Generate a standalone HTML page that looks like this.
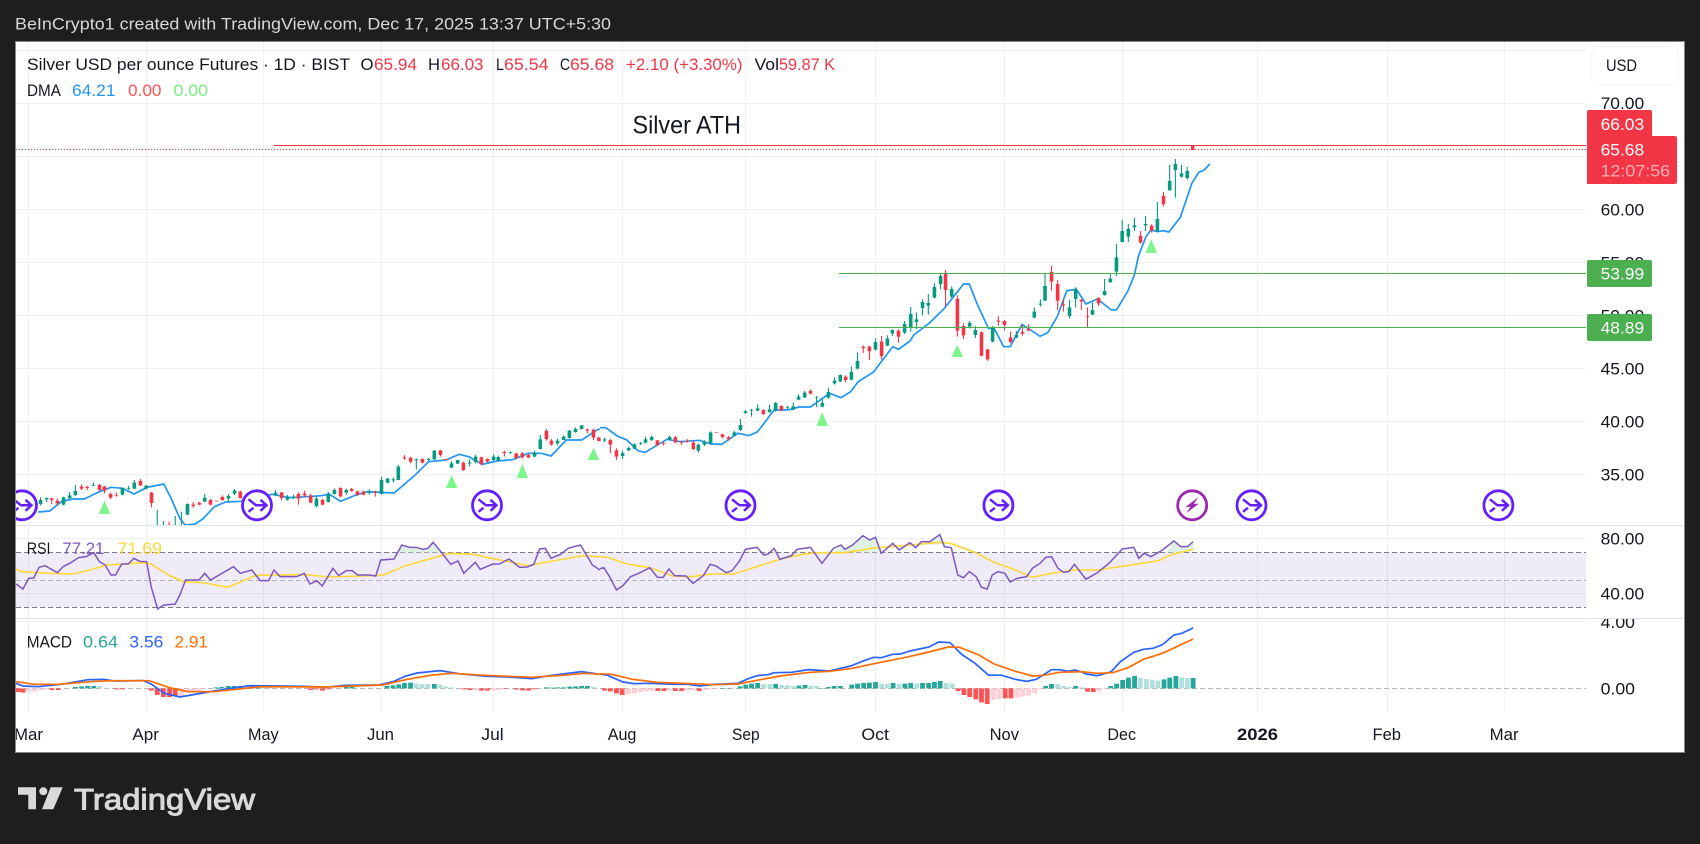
<!DOCTYPE html>
<html><head><meta charset="utf-8"><style>
html,body{margin:0;padding:0;background:#1e1e1e;width:1700px;height:844px;overflow:hidden}
svg{display:block}
text{font-family:"Liberation Sans",sans-serif;font-size:17px;fill:#131722}
.z path,.z polyline{vector-effect:non-scaling-stroke;fill:none}
.z polygon{stroke:none}
.g{stroke:#089981}.r{stroke:#f23645}
.w{stroke-width:1.1}.b{stroke-width:3.6}
.h{stroke-width:4.8}
.wt{fill:#fff}
</style></head><body>
<svg width="1700" height="844" viewBox="0 0 1700 844" xmlns="http://www.w3.org/2000/svg">
<defs>
<clipPath id="f"><rect x="16" y="42" width="1668" height="710"/></clipPath>
<clipPath id="p"><rect x="16" y="42" width="1570" height="483"/></clipPath>
<clipPath id="m"><rect x="1586" y="619" width="98" height="30"/></clipPath>
<g id="ev"><circle r="14.5" fill="#fff" stroke="#651fff" stroke-width="2.8"/><path d="M-8.5-6 -1 0H9M3.5-5.5 9.5 0 3.5 5.5M-8.5 6.5-3.5 2.5" fill="none" stroke="#651fff" stroke-width="2.5"/></g>
</defs>
<text x="15" y="29.5" textLength="596" lengthAdjust="spacingAndGlyphs" style="fill:#d8d8d8;font-size:17px">BeInCrypto1 created with TradingView.com, Dec 17, 2025 13:37 UTC+5:30</text>
<rect x="15.5" y="41.5" width="1669" height="711" fill="#fff" stroke="#888"/>
<g stroke="#f0f0f2" fill="none">
<path d="M16 50.5H1586M16 103.5H1586M16 156.5H1586M16 209.5H1586M16 262.5H1586M16 315.5H1586M16 368.5H1586M16 421.5H1586M16 474.5H1586M16 538.5H1586M16 593.5H1586M16 621.5H1586"/>
<path d="M28.5 42V712M146.5 42V712M263.5 42V712M381.5 42V712M493.5 42V712M622.5 42V712M745.5 42V712M875.5 42V712M1004.5 42V712M1122.5 42V712M1257.5 42V712M1387.5 42V712M1504.5 42V712"/>
</g>
<rect x="16" y="552" width="1570" height="55.5" fill="#7e57c2" fill-opacity=".12"/>
<path d="M16 525.5H1684M16 618.5H1684" stroke="#e0e3eb"/>
<path d="M16 552.5H1586M16 607.5H1586" stroke="#787b86" stroke-dasharray="5 3"/>
<path d="M16 580.5H1586M16 688.5H1586" stroke="#b2b5be" stroke-dasharray="5 3"/>

<!-- price candles -->
<g clip-path="url(#p)">
<g class="z" transform="translate(0,400) scale(.38265,.33333)">
<polyline stroke="#2196f3" stroke-width="1.7" points="100,336 130,333 160,305 190,297 220,297 260,275 290,262 320,265 350,282 385,262 428,252 445,290 470,355 484,375 510,372 530,357 560,320 590,306 630,304 710,283 760,293 800,290 840,287 860,282 890,304 930,285 960,275 1030,279 1085,225 1120,185 1165,180 1200,163 1225,170 1260,193 1300,183 1340,179 1380,160 1415,160 1440,168 1480,120 1520,120 1560,90 1568,87"/>
<path class="g w" d="M106 292V316M122 292V306M166 290V316M182 276V296M197 255V288M244 247V258M320 262V286M336 258V270M351 240V268M382 255V268M411 330V376M427 363V376M458 348V376M474 335V376M490 310V346M535 282V306M597 282V306M613 267V285M720 270V286M751 285V302M767 284V297M827 290V322M858 276V308M874 265V284M905 266V285M965 268V284M997 230V284M1013 234V250M1028 233V247M1041 195V240M1088 176V208M1120 174V184M1135 150V180M1180 184V204M1196 180V192M1227 178V200M1243 165V190M1290 163V183M1302 167V184M1334 154V162M1397 152V172M1412 105V148M1457 116V136M1473 106V120M1488 90V116M1504 82V98M1520 75V88"/>
<path class="g b" d="M106 300V312M122 294V298M166 292V314M182 286V295M197 273V285M244 255V257M320 264V284M336 264V266M351 248V266M382 257V266M490 312V344M535 293V305M597 288V296M613 272V281M720 278V285M751 291V299M767 290V292M827 296V318M858 285V306M874 270V282M905 270V278M965 276V279M997 240V282M1013 236V248M1028 238V241M1041 200V240M1088 178V181M1120 177V180M1135 152V178M1180 190V203M1196 180V191M1227 188V191M1243 170V186M1290 170V180M1302 171V181M1334 156V158M1397 158V170M1412 118V147M1457 122V130M1473 110V120M1488 92V114M1504 87V96M1520 76V87"/>
<path class="r w" d="M135 294V312M150 296V316M213 254V270M228 257V270M260 252V272M273 258V280M289 278V297M304 277V290M367 237V258M396 276V322M442 365V376M505 306V323M521 306V316M550 297V316M581 286V303M628 272V296M736 276V302M780 277V314M796 272V292M812 282V310M843 296V316M890 262V292M919 264V275M934 272V288M950 272V286M981 272V290M1057 165V180M1073 170V190M1104 175V190M1151 150V170M1211 185V213M1258 170V196M1274 175V188M1318 152V170M1349 157V178M1365 156V176M1381 160V174M1428 87V122M1441 117V137M1535 85V100M1551 86V120M1565 110V124"/>
<path class="r b" d="M135 295V300M150 302V310M213 260V266M228 261V264M260 255V270M273 259V272M289 282V293M304 286V288M367 243V256M396 278V309M505 314V318M521 308V314M550 300V314M566 302V304M581 291V300M628 275V294M736 277V294M780 282V296M796 281V286M812 286V308M843 300V314M890 264V289M919 267V273M934 274V285M950 275V284M981 276V279M1057 172V175M1073 174V185M1104 177V188M1151 151V165M1166 177V180M1211 188V210M1258 172V192M1274 177V185M1318 156V159M1349 161V174M1365 160V172M1381 165V173M1428 93V117M1441 122V134M1535 89V92M1551 89V113M1565 113V123"/>
</g>
<g class="z" transform="translate(600,260) scale(.38265,.33333)">
<polyline stroke="#2196f3" stroke-width="1.7" points="0,503 15,503 45,528 70,540 100,573 118,577 175,538 210,545 260,541 290,552 318,553 360,520 390,527 412,515 455,450 490,450 520,441 550,441 600,400 630,413 655,395 675,365 715,336 765,260 780,268 810,243 820,225 860,190 900,145 950,72 965,72 985,130 1015,205 1030,205 1055,260 1072,260 1103,193 1150,229 1170,218 1195,170 1220,92 1245,88 1270,132 1300,117 1335,149 1350,150"/>
<path class="g w" d="M12 533V546M59 571V597M75 560V573M90 550V568M106 546V555M119 530V550M135 527V543M182 526V541M257 551V578M273 541V558M289 514V553M351 513V530M367 477V513M380 450V461M396 447V470M412 433V453M443 435V458M459 426V455M490 438V449M505 427V450M519 403V421M535 393V414M566 408V441M581 415V442M597 384V416M613 352V374M628 343V366M657 319V361M673 277V328M720 235V271M751 226V258M764 208V228M796 183V222M812 141V215M827 157V207M843 118V166M858 102V164M874 70V115M890 42V88M919 79V114M966 183V205M981 198V234M1026 198V247M1088 213V235M1135 142V175M1151 118V140M1163 42V123M1227 120V176M1243 82V142M1287 127V165"/>
<path class="g b" d="M12 538V541M59 579V588M75 564V571M90 553V566M106 549V551M119 538V548M135 531V540M182 531V539M257 554V572M273 545V554M289 517V550M351 517V527M367 495V510M380 454V459M396 451V453M412 445V452M443 448V456M459 429V451M490 442V444M505 439V449M519 410V419M535 398V412M566 412V414M581 429V440M597 396V413M613 362V370M628 345V364M657 336V359M673 303V326M720 246V269M751 235V257M764 210V220M796 192V218M812 162V204M827 178V186M843 126V144M858 129V137M874 81V113M890 48V72M919 87V110M966 189V200M981 210V225M1026 202V245M1088 225V233M1135 155V173M1151 131V134M1163 78V122M1227 142V168M1243 87V117M1287 150V164"/>
<path class="r w" d="M27 536V580M43 565V600M150 540V558M166 545V557M197 528V550M213 542V554M228 537V548M244 542V570M320 521V535M336 528V542M427 448V465M474 436V454M550 388V403M642 346V367M688 256V279M704 257V300M736 228V298M780 208V248M903 30V140M934 106V230M950 190V237M997 214V289M1013 267V303M1041 168V197M1057 180V212M1073 215V250M1104 194V227M1120 193V214M1180 18V92M1196 60V150M1211 117V155M1258 117V150M1274 142V202M1303 112V138"/>
<path class="r b" d="M27 540V554M43 571V590M150 541V555M166 549V551M197 532V547M213 546V548M228 542V545M244 548V567M304 517V519M320 523V531M336 532V537M427 450V462M474 438V451M550 393V401M642 350V360M688 261V264M704 260V274M736 245V288M780 212V230M903 42V90M934 117V212M950 198V226M997 217V287M1013 268V298M1041 182V185M1057 183V195M1073 232V246M1104 216V221M1120 207V211M1180 36V65M1196 72V122M1211 133V137M1258 120V124M1274 168V170M1303 114V130"/>
</g>
<g class="z" transform="translate(1100,30) scale(.38265,.33333)">
<polyline stroke="#2196f3" stroke-width="1.7" points="43,840 72,785 90,735 100,680 120,620 133,600 150,605 165,602 180,606 210,562 240,460 258,427 272,420 287,402"/>
<path class="g w" d="M12 747V797M27 730V758M43 642V738M58 570V638M74 582V636M90 564V603M119 558V603M150 516V606M182 405V482M197 387V503M213 405V443M228 411V449"/>
<path class="g b" d="M12 783V795M27 746V757M43 682V725M58 603V636M74 597V620M90 586V592M119 582V586M150 567V604M182 453V481M197 402V420M213 430V440M228 423V444"/>
<path class="r w" d="M106 603V641M135 583V608M166 486V530"/>
<path class="r b" d="M106 618V638M135 587V601M166 498V522"/>
</g>
<g fill="#7ef58a">
<polygon points="104.5,500.7 110.3,514 98.7,514"/>
<polygon points="451.6,475.3 457.4,488 445.8,488"/>
<polygon points="522.4,464 528.2,478 516.6,478"/>
<polygon points="593.5,447.7 599.3,460 587.7,460"/>
<polygon points="822.3,412.3 828.1,426 816.5,426"/>
<polygon points="957.4,344.7 963.2,357 951.6,357"/>
<polygon points="1151.3,239.3 1157.1,253 1145.5,253"/>
</g>
<use href="#ev" x="22" y="505.3"/><use href="#ev" x="257" y="505.3"/><use href="#ev" x="487" y="505.3"/><use href="#ev" x="740.5" y="505.3"/><use href="#ev" x="998.4" y="505.3"/><use href="#ev" x="1251.5" y="505.3"/><use href="#ev" x="1498.4" y="505.3"/>
<circle cx="1192.2" cy="505.3" r="14.5" fill="#fff" stroke="#9c27b0" stroke-width="2.8"/>
<polygon transform="translate(1192.2,505.3)" points="6,-8 -6.5,1.6 -1.6,1.6 -6,8 6.5,-1.6 1.6,-1.6" fill="#9c27b0"/>
</g>

<!-- lines -->
<path d="M274 145.5H1586" stroke="#f23645" stroke-width="1"/>
<path d="M16 149.5H1586" stroke="#f23645" stroke-dasharray="1 2"/>
<rect x="1191" y="146" width="3.4" height="4" fill="#f23645"/>
<path d="M839 273.5H1586M839 327.5H1586" stroke="#4caf50"/>

<!-- RSI -->
<g class="z" transform="translate(600,520) scale(.38265,.33333)">
<polygon fill="#dff1e2" points="612,97 630,75 640,88 660,75 687,47 705,60 720,52 731,97"/>
<polygon fill="#dff1e2" points="760,85 765,70 782,90 810,68 825,83 840,65 862,65 888,44 900,80 906,72 780,78"/>
<polygon fill="#dff1e2" points="1480,97 1500,63 1518,80 1535,80 1550,65 1550,88 1510,97"/>
<polyline stroke="#fdd835" stroke-width="1.6" points="0,110 20,112 70,132 130,143 190,168 240,170 290,162 350,162 450,125 480,115 530,103 560,98 640,98 710,85 780,78 890,67 915,70 980,97 1030,127 1075,145 1130,172 1180,160 1240,150 1300,150 1400,133 1460,122 1490,105 1550,88"/>
<polyline stroke="#7e57c2" stroke-width="1.5" points="0,146 10,143 25,170 43,210 60,197 80,170 105,158 130,143 150,172 165,172 180,147 195,167 225,168 243,190 270,167 288,133 303,138 330,158 345,152 365,122 380,88 410,82 428,105 440,102 455,85 470,118 500,107 515,88 550,82 580,130 610,85 630,75 640,88 660,75 687,47 705,60 720,52 735,100 765,70 782,90 810,68 825,83 840,65 862,65 888,44 900,80 918,83 935,165 950,173 965,155 983,170 997,202 1012,207 1025,165 1040,155 1058,160 1072,186 1090,175 1115,170 1130,145 1150,130 1165,112 1180,110 1197,145 1212,157 1225,155 1240,133 1270,178 1300,158 1330,130 1365,87 1395,82 1408,115 1422,100 1440,110 1470,90 1500,63 1518,80 1535,80 1550,65"/>
</g>
<g class="z" transform="translate(0,440) scale(.38265,.33333)">
<polygon fill="#dff1e2" points="1040,337 1050,315 1070,322 1088,322 1105,328 1118,325 1132,307 1150,332 1153,337"/>
<polyline stroke="#fdd835" stroke-width="1.6" points="42,387 55,395 100,398 130,400 190,402 225,393 280,375 380,368 395,372 440,405 480,425 530,428 595,442 620,430 670,406 800,404 860,411 1000,406 1060,377 1120,358 1175,340 1240,343 1270,352 1330,365 1380,377 1430,366 1520,348 1568,350"/>
<polyline stroke="#7e57c2" stroke-width="1.5" points="42,432 60,447 75,415 88,414 102,382 118,377 150,398 165,380 185,368 205,353 225,350 245,338 260,365 275,375 290,405 302,405 318,372 335,372 350,355 365,364 383,365 395,440 412,507 428,495 458,492 470,465 485,420 520,420 535,400 550,420 610,380 628,400 658,390 680,422 702,422 716,390 732,410 775,410 795,400 810,432 828,422 842,438 870,385 885,407 905,392 920,392 935,405 965,405 982,408 995,360 1030,357 1050,315 1070,322 1088,322 1105,328 1118,325 1132,307 1150,332 1178,373 1197,363 1212,400 1242,367 1255,388 1288,372 1305,372 1330,357 1358,382 1378,381 1395,373 1410,327 1425,325 1440,355 1465,343 1485,325 1517,315 1548,375 1568,390"/>

<!-- MACD hist left -->
<path class="h" stroke="#26a69a" d="M197 745V741M213 745V739M229 745V738M245 745V738M565 745V742M580 745V741M597 745V738M612 745V738M628 745V738M658 745V737M673 745V738M905 745V741M920 745V741M1011 745V738M1027 745V736M1042 745V733M1057 745V729M1073 745V728M1135 745V732M1428 745V742M1443 745V743M1458 745V742M1473 745V742M1489 745V740M1504 745V739M1520 745V738M1535 745V738"/>
<path class="h" stroke="#b2dfdb" d="M260 745V738M643 745V739M690 745V740M705 745V741M1088 745V730M1103 745V732M1118 745V732M1150 745V734M1165 745V739M1180 745V742M1550 745V741"/>
<path class="h" stroke="#ff5252" d="M47 745V756M60 745V758M136 745V750M152 745V750M305 745V748M320 745V748M395 745V752M411 745V765M427 745V771M443 745V771M458 745V767M812 745V750M828 745V748M843 745V752M858 745V748M1212 745V748M1228 745V750M1258 745V752M1274 745V752M1320 745V747M1350 745V749M1366 745V751M1381 745V752M1397 745V748"/>
<path class="h" stroke="#ffcdd2" d="M75 745V755M90 745V754M105 745V750M120 745V749M275 745V743M474 745V768M490 745V758M505 745V755M520 745V752M1243 745V750M1290 745V752M1305 745V750"/>
<polyline stroke="#2962ff" stroke-width="1.7" points="42,730 60,738 100,740 160,733 230,719 270,718 300,723 375,722 395,732 430,760 470,771 500,765 560,753 650,737 800,739 850,742 900,736 990,735 1030,724 1060,708 1090,699 1150,692 1200,701 1270,709 1330,711 1390,716 1430,708 1520,695 1568,703"/>
<polyline stroke="#ff6d00" stroke-width="1.7" points="42,725 90,733 150,733 250,724 300,722 390,722 440,742 490,755 560,755 680,740 850,741 1000,735 1060,719 1130,705 1180,700 1270,706 1390,712 1470,706 1530,700 1568,703"/>
</g>
<g class="z" transform="translate(600,520) scale(.38265,.33333)">
<path class="h" stroke="#26a69a" d="M320 505V504M335 505V504M366 505V499M381 505V494M396 505V491M412 505V489M459 505V492M520 505V497M536 505V495M580 505V504M597 505V501M612 505V498M628 505V498M658 505V494M673 505V491M689 505V489M704 505V488M720 505V486M766 505V489M797 505V491M812 505V489M843 505V489M859 505V489M874 505V486M889 505V483M1165 505V498M1180 505V492M1243 505V498M1335 505V498M1350 505V491M1366 505V480M1381 505V473M1397 505V468M1474 505V478M1489 505V473M1505 505V468M1550 505V474"/>
<path class="h" stroke="#b2dfdb" d="M350 505V503M428 505V492M444 505V492M475 505V495M490 505V496M505 505V498M551 505V497M566 505V498M736 505V491M751 505V492M782 505V492M828 505V491M905 505V489M920 505V491M1196 505V492M1212 505V498M1227 505V501M1258 505V502M1412 505V474M1428 505V477M1443 505V479M1458 505V482M1520 505V472M1535 505V474"/>
<path class="h" stroke="#ff5252" d="M12 505V512M27 505V514M43 505V520M58 505V525M151 505V513M167 505V513M197 505V513M213 505V513M259 505V513M936 505V513M951 505V525M966 505V531M982 505V538M997 505V547M1012 505V552M1059 505V535M1074 505V535M1274 505V515M1289 505V516"/>
<path class="h" stroke="#ffcdd2" d="M74 505V522M90 505V521M106 505V516M121 505V514M135 505V512M182 505V512M228 505V512M244 505V511M275 505V510M290 505V508M305 505V507M1028 505V540M1043 505V537M1090 505V533M1105 505V530M1120 505V527M1136 505V520M1150 505V508M1304 505V514M1319 505V507"/>
<polyline stroke="#2962ff" stroke-width="1.7" points="0,462 20,466 60,486 90,491 130,490 190,493 230,493 260,498 300,493 360,490 390,475 410,467 440,464 455,458 500,457 545,449 600,453 655,438 690,422 715,412 735,413 765,403 785,402 810,393 860,381 885,366 915,368 945,403 980,430 1015,465 1050,466 1085,478 1115,484 1140,478 1180,449 1200,449 1225,454 1240,450 1260,456 1270,462 1300,467 1335,456 1360,425 1395,397 1420,388 1445,385 1470,374 1500,345 1520,340 1550,324"/>
<polyline stroke="#ff6d00" stroke-width="1.7" points="0,461 30,463 85,478 150,487 240,491 300,494 360,492 410,481 470,468 550,457 600,454 660,445 720,430 800,412 860,396 910,381 940,382 990,405 1030,432 1080,452 1130,468 1160,466 1200,457 1260,455 1300,460 1340,458 1380,443 1420,418 1470,400 1550,357"/>
</g>

<!-- legends -->
<text x="27" y="70" textLength="323" lengthAdjust="spacingAndGlyphs">Silver USD per ounce Futures · 1D · BIST</text>
<text x="360.5" y="70" textLength="13" lengthAdjust="spacingAndGlyphs">O</text><text x="374" y="70" textLength="43" lengthAdjust="spacingAndGlyphs" style="fill:#f23645">65.94</text>
<text x="428" y="70" textLength="12" lengthAdjust="spacingAndGlyphs">H</text><text x="441" y="70" textLength="42.5" lengthAdjust="spacingAndGlyphs" style="fill:#f23645">66.03</text>
<text x="496" y="70" textLength="8" lengthAdjust="spacingAndGlyphs">L</text><text x="504" y="70" textLength="44.5" lengthAdjust="spacingAndGlyphs" style="fill:#f23645">65.54</text>
<text x="560" y="70" textLength="10" lengthAdjust="spacingAndGlyphs">C</text><text x="570" y="70" textLength="44" lengthAdjust="spacingAndGlyphs" style="fill:#f23645">65.68</text>
<text x="626" y="70" textLength="116.5" lengthAdjust="spacingAndGlyphs" style="fill:#f23645">+2.10 (+3.30%)</text>
<text x="754.5" y="70" textLength="24.5" lengthAdjust="spacingAndGlyphs">Vol</text><text x="779" y="70" textLength="56" lengthAdjust="spacingAndGlyphs" style="fill:#f23645">59.87 K</text>
<text x="27" y="96" textLength="34" lengthAdjust="spacingAndGlyphs">DMA</text>
<text x="72" y="96" textLength="43.5" lengthAdjust="spacingAndGlyphs" style="fill:#2196f3">64.21</text>
<text x="128" y="96" textLength="33.5" lengthAdjust="spacingAndGlyphs" style="fill:#ff5252">0.00</text>
<text x="173.5" y="96" textLength="34.5" lengthAdjust="spacingAndGlyphs" style="fill:#75f07f">0.00</text>
<text x="632.5" y="133.5" textLength="108.5" lengthAdjust="spacingAndGlyphs" style="font-size:25px">Silver ATH</text>
<text x="26.8" y="554" textLength="23.7" lengthAdjust="spacingAndGlyphs">RSI</text>
<text x="62.4" y="554" textLength="42" lengthAdjust="spacingAndGlyphs" style="fill:#7e57c2">77.21</text>
<text x="117.5" y="554" textLength="44.5" lengthAdjust="spacingAndGlyphs" style="fill:#fdd835">71.69</text>
<text x="26.8" y="647.7" textLength="45.2" lengthAdjust="spacingAndGlyphs">MACD</text>
<text x="83" y="647.7" textLength="35" lengthAdjust="spacingAndGlyphs" style="fill:#26a69a">0.64</text>
<text x="129.4" y="647.7" textLength="34" lengthAdjust="spacingAndGlyphs" style="fill:#2962ff">3.56</text>
<text x="174.5" y="647.7" textLength="33.5" lengthAdjust="spacingAndGlyphs" style="fill:#ff6d00">2.91</text>

<!-- price axis -->
<rect x="1591.8" y="46.8" width="86.2" height="38" rx="6" fill="#fff" stroke="#f0f3fa"/>
<text x="1606" y="71" textLength="31" lengthAdjust="spacingAndGlyphs">USD</text>
<g>
<text x="1600.6" y="109" textLength="43.6" lengthAdjust="spacingAndGlyphs">70.00</text>
<text x="1600.6" y="215.3" textLength="43.6" lengthAdjust="spacingAndGlyphs">60.00</text>
<text x="1600.6" y="268.3" textLength="43.6" lengthAdjust="spacingAndGlyphs">55.00</text>
<text x="1600.6" y="321.3" textLength="43.6" lengthAdjust="spacingAndGlyphs">50.00</text>
<text x="1600.6" y="374.3" textLength="43.6" lengthAdjust="spacingAndGlyphs">45.00</text>
<text x="1600.6" y="427.3" textLength="43.6" lengthAdjust="spacingAndGlyphs">40.00</text>
<text x="1600.6" y="480.3" textLength="43.6" lengthAdjust="spacingAndGlyphs">35.00</text>
<text x="1600.6" y="544.7" textLength="43.6" lengthAdjust="spacingAndGlyphs">80.00</text>
<text x="1600.6" y="599.3" textLength="43.6" lengthAdjust="spacingAndGlyphs">40.00</text>
<text x="1600.6" y="628" textLength="34.4" lengthAdjust="spacingAndGlyphs" clip-path="url(#m)">4.00</text>
<text x="1600.6" y="694.3" textLength="34.4" lengthAdjust="spacingAndGlyphs">0.00</text>
</g>
<path d="M1587 136V112a2 2 0 0 1 2-2H1650a2 2 0 0 1 2 2V136Z" fill="#f23645"/>
<path d="M1587 136H1675a2 2 0 0 1 2 2V182a2 2 0 0 1-2 2H1587Z" fill="#f23645"/>
<rect x="1587" y="260" width="65" height="27" rx="2" fill="#4caf50"/>
<rect x="1587" y="314" width="65" height="27" rx="2" fill="#4caf50"/>
<text x="1600.6" y="130" textLength="43.6" lengthAdjust="spacingAndGlyphs" class="wt">66.03</text>
<text x="1600.6" y="155.3" textLength="43.6" lengthAdjust="spacingAndGlyphs" class="wt">65.68</text>
<text x="1600.6" y="176.7" textLength="69.5" lengthAdjust="spacingAndGlyphs" style="fill:#fbb0b6">12:07:56</text>
<text x="1600.6" y="279.5" textLength="43.6" lengthAdjust="spacingAndGlyphs" class="wt">53.99</text>
<text x="1600.6" y="333.5" textLength="43.6" lengthAdjust="spacingAndGlyphs" class="wt">48.89</text>

<!-- time axis -->
<g clip-path="url(#f)">
<text x="14" y="740" textLength="29" lengthAdjust="spacingAndGlyphs">Mar</text>
<text x="132.4" y="740" textLength="26.6" lengthAdjust="spacingAndGlyphs">Apr</text>
<text x="248" y="740" textLength="30.6" lengthAdjust="spacingAndGlyphs">May</text>
<text x="367" y="740" textLength="27" lengthAdjust="spacingAndGlyphs">Jun</text>
<text x="481.4" y="740" textLength="22.2" lengthAdjust="spacingAndGlyphs">Jul</text>
<text x="607.7" y="740" textLength="28.7" lengthAdjust="spacingAndGlyphs">Aug</text>
<text x="732" y="740" textLength="27.6" lengthAdjust="spacingAndGlyphs">Sep</text>
<text x="861.4" y="740" textLength="27.6" lengthAdjust="spacingAndGlyphs">Oct</text>
<text x="989.6" y="740" textLength="29.4" lengthAdjust="spacingAndGlyphs">Nov</text>
<text x="1107.4" y="740" textLength="28.6" lengthAdjust="spacingAndGlyphs">Dec</text>
<text x="1237" y="740" textLength="41" lengthAdjust="spacingAndGlyphs" style="font-weight:bold">2026</text>
<text x="1372.5" y="740" textLength="28.5" lengthAdjust="spacingAndGlyphs">Feb</text>
<text x="1489.6" y="740" textLength="29" lengthAdjust="spacingAndGlyphs">Mar</text>
</g>

<!-- logo -->
<g fill="#d9d9d9">
<polygon points="18,787.3 36,787.3 36,809.3 28.3,809.3 28.3,794.7 18,794.7"/>
<circle cx="43.3" cy="791.3" r="4"/>
<polygon points="50.7,787.3 62.7,787.3 53.3,809.3 42,809.3"/>
</g>
<text x="74" y="809.3" textLength="181" lengthAdjust="spacingAndGlyphs" style="font-size:30px;fill:#d9d9d9;stroke:#d9d9d9;stroke-width:1">TradingView</text>
</svg>
</body></html>
